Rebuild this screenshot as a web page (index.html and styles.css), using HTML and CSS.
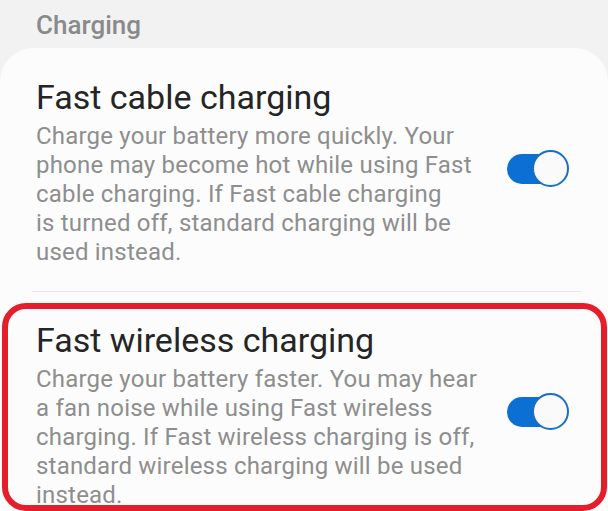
FILE: index.html
```html
<!DOCTYPE html>
<html lang="en">
<head>
    <meta charset="UTF-8">
    <meta name="viewport" content="width=device-width, initial-scale=1.0">
    <title>Charging</title>
    <link rel="stylesheet" href="styles.css">
</head>
<body>

    <h2 class="section-title">Charging</h2>

    <div class="card">
        <!-- Fast cable charging -->
        <div class="setting">
            <div class="setting-text">
                <div class="setting-name">Fast cable charging</div>
                <div class="setting-desc">
                    Charge your battery more quickly. Your<br>
                    phone may become hot while using Fast<br>
                    cable charging. If Fast cable charging<br>
                    is turned off, standard charging will be<br>
                    used instead.
                </div>
            </div>
            <div class="switch on">
                <span class="track"></span>
                <span class="thumb"></span>
            </div>
        </div>

        <div class="divider"></div>

        <!-- Fast wireless charging -->
        <div class="setting">
            <div class="setting-text">
                <div class="setting-name">Fast wireless charging</div>
                <div class="setting-desc">
                    Charge your battery faster. You may hear<br>
                    a fan noise while using Fast wireless<br>
                    charging. If Fast wireless charging is off,<br>
                    standard wireless charging will be used<br>
                    instead.
                </div>
            </div>
            <div class="switch on">
                <span class="track"></span>
                <span class="thumb"></span>
            </div>
        </div>
    </div>

    <!-- highlight box drawn over the second setting -->
    <div class="highlight"></div>

</body>
</html>
```

FILE: styles.css
```css
html, body {
    height: 511px;
    overflow: hidden;
}

body {
    margin: 0;
    background-color: #f2f2f2;
    font-family: Roboto, "Liberation Sans", sans-serif;
    position: relative;
}

.section-title {
    margin: 0 0 7px 0;
    padding: 9px 0 0 36px;
    font-size: 26px;
    line-height: 32px;
    font-weight: 500;
    color: #8a8a8a;
}

.card {
    background-color: #fcfcfc;
    border-radius: 34px 34px 0 0;
    padding-top: 1px;
}

.setting {
    display: flex;
    align-items: center;
    padding: 28px 39px 24px 36px;
}

.setting-text {
    flex: 1;
    white-space: nowrap;
}

.setting-name {
    font-size: 34px;
    line-height: 40px;
    color: #252525;
}

.setting-desc {
    margin-top: 5px;
    font-size: 24px;
    line-height: 29px;
    letter-spacing: 0.2px;
    color: #8e8e8e;
}

.divider {
    height: 1px;
    margin: 0 27px 0 32px;
    background-color: #e3e7ee;
}

.switch {
    position: relative;
    width: 62px;
    height: 37px;
    margin-bottom: 7px;
    flex-shrink: 0;
}

.switch .track {
    position: absolute;
    left: 0;
    top: 3.5px;
    width: 50px;
    height: 30px;
    border-radius: 15px;
    background-color: #0c6fd3;
}

.switch .thumb {
    position: absolute;
    right: 0;
    top: 0;
    width: 37px;
    height: 37px;
    box-sizing: border-box;
    border-radius: 50%;
    border: 2.5px solid #1a6fc4;
    background-color: #fafafa;
}

.highlight {
    position: absolute;
    left: 2px;
    top: 303px;
    width: 605px;
    height: 208px;
    box-sizing: border-box;
    border: 6.5px solid #e41e2a;
    border-radius: 24px;
}
```
